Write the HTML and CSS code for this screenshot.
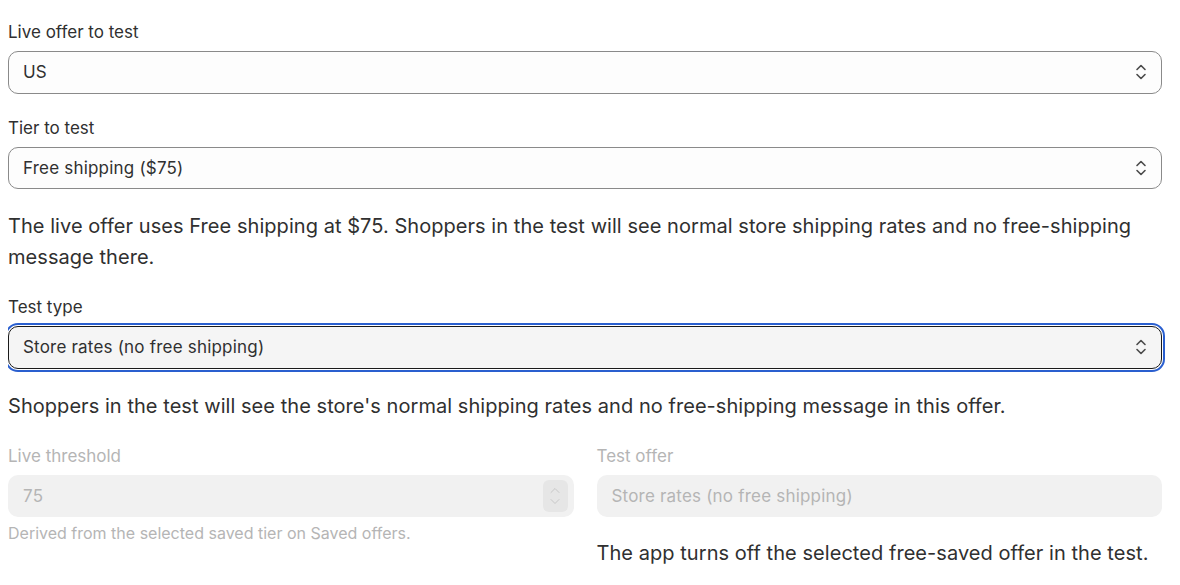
FILE: index.html
```html
<!DOCTYPE html>
<html lang="en">
<head>
  <meta charset="UTF-8" />
  <title>Test setup</title>
  <link rel="stylesheet" href="styles.css">
</head>
<body>
  <div class="form">
    <!-- Live offer -->
    <div class="field">
      <label class="label">Live offer to test</label>
      <div class="select">
        <span>US</span>
        <svg class="chev" width="12" height="18" viewBox="0 0 12 18"><path d="M2 6.5 6 2.5 10 6.5M2 11.5 6 15.5 10 11.5" fill="none" stroke="currentColor" stroke-width="1.6" stroke-linecap="round" stroke-linejoin="round"/></svg>
      </div>
    </div>

    <!-- Tier -->
    <div class="field">
      <label class="label">Tier to test</label>
      <div class="select">
        <span>Free shipping ($75)</span>
        <svg class="chev" width="12" height="18" viewBox="0 0 12 18"><path d="M2 6.5 6 2.5 10 6.5M2 11.5 6 15.5 10 11.5" fill="none" stroke="currentColor" stroke-width="1.6" stroke-linecap="round" stroke-linejoin="round"/></svg>
      </div>
    </div>

    <p class="note">The live offer uses Free shipping at $75. Shoppers in the test will see normal store shipping rates and no free-shipping message there.</p>

    <!-- Test type (focused) -->
    <div class="field">
      <label class="label">Test type</label>
      <div class="select focused">
        <span>Store rates (no free shipping)</span>
        <svg class="chev" width="12" height="18" viewBox="0 0 12 18"><path d="M2 6.5 6 2.5 10 6.5M2 11.5 6 15.5 10 11.5" fill="none" stroke="currentColor" stroke-width="1.6" stroke-linecap="round" stroke-linejoin="round"/></svg>
      </div>
    </div>

    <p class="note">Shoppers in the test will see the store's normal shipping rates and no free-shipping message in this offer.</p>

    <div class="columns">
      <div class="field">
        <label class="label disabled">Live threshold</label>
        <div class="input disabled">
          <span>75</span>
          <div class="spinner">
            <svg width="14" height="28" viewBox="0 0 14 28"><path d="M3 10.5 7 6.5 11 10.5M3 17.5 7 21.5 11 17.5" fill="none" stroke="currentColor" stroke-width="1" stroke-linecap="round" stroke-linejoin="round"/></svg>
          </div>
        </div>
        <div class="help">Derived from the selected saved tier on Saved offers.</div>
      </div>
      <div class="field">
        <label class="label disabled">Test offer</label>
        <div class="input disabled">
          <span>Store rates (no free shipping)</span>
        </div>
        <p class="note side">The app turns off the selected free-saved offer in the test.</p>
      </div>
    </div>
  </div>
</body>
</html>
```

FILE: styles.css
```css
* { box-sizing: border-box; }

body {
  margin: 8px;
  background: #fff;
  font-family: Inter, "Noto Sans", sans-serif;
  color: #303030;
}

/* Main form column */
.form {
  display: flex;
  flex-direction: column;
  gap: 22px;
  padding: 12px 10px 0 0;
}

.field {
  display: flex;
  flex-direction: column;
  gap: 7px;
}

.label {
  font-size: 17px;
  line-height: 24px;
  color: #303030;
}
.label.disabled { color: #b5b5b5; }

/* Select boxes */
.select {
  height: 42.5px;
  display: flex;
  align-items: center;
  justify-content: space-between;
  padding: 0 14px 0 14px;
  border: 1px solid #8a8a8a;
  border-radius: 10px;
  background: #fdfdfd;
  font-size: 17px;
  letter-spacing: 0.2px;
  color: #303030;
}
.select .chev { color: #4a4a4a; }

.select.focused {
  background: #f5f5f5;
  border-color: #1a1a1a;
  outline: 2px solid #2a5fcf;
  outline-offset: 1px;
}

.note {
  margin: 0;
  font-size: 20px;
  line-height: 31px;
  letter-spacing: 0.05px;
  color: #303030;
}

/* Two read-only fields side by side */
.columns {
  display: grid;
  grid-template-columns: 1fr 1fr;
  gap: 23px;
}

.input {
  height: 42px;
  display: flex;
  align-items: center;
  justify-content: space-between;
  padding: 0 6px 0 15px;
  border-radius: 10px;
  font-size: 17px;
  letter-spacing: 0.2px;
}
.input.disabled {
  background: #f1f1f1;
  color: #b5b5b5;
}

.spinner {
  width: 25px;
  height: 32px;
  display: flex;
  align-items: center;
  justify-content: center;
  background: #e6e6e6;
  border-radius: 6px;
  color: #c8c8c8;
}

.help {
  font-size: 16px;
  line-height: 20px;
  color: #b5b5b5;
  margin-top: -1px;
}

.note.side { margin-top: 14px; }
```
